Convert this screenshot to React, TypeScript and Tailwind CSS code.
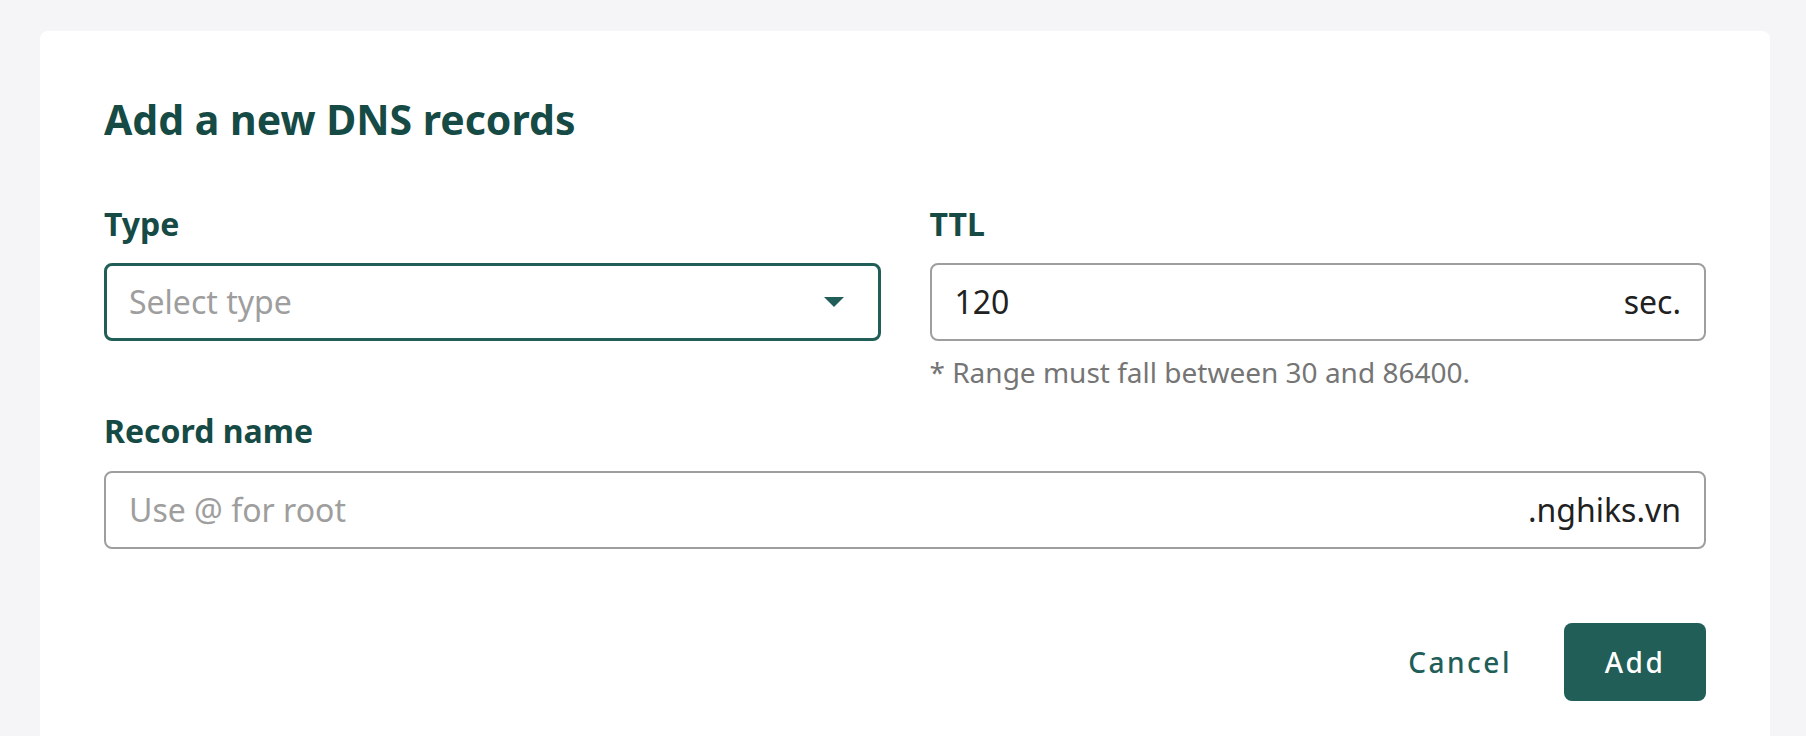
export default function App() {
  return (
    <main
      className="min-h-screen bg-[#f5f5f7] pt-[31px] pl-[40px] pr-[36px]"
      style={{ fontFamily: '"Noto Sans", "Open Sans", sans-serif' }}
    >
      <div className="rounded-lg bg-white px-[64px] pt-[60px] pb-[64px]">
        {/* TITLE */}
        <h1 className="text-[41px] leading-[56px] font-bold text-[#164a45]">
          Add a new DNS records
        </h1>

        {/* TYPE + TTL */}
        <div className="mt-[55px] grid grid-cols-2 gap-x-[49px]">
          <div>
            <label className="block text-[32px] leading-[44px] font-bold text-[#164a45]">
              Type
            </label>
            <div className="mt-[17px] flex h-[78px] items-center justify-between rounded-lg border-[3px] border-[#225e58] pl-[22px] pr-[34px]">
              <span className="text-[32px] text-[#9e9e9e]">Select type</span>
              <svg width="20" height="10" viewBox="0 0 20 10">
                <path d="M0 0 L20 0 L10 10 Z" fill="#225e58" />
              </svg>
            </div>
          </div>

          <div>
            <label className="block text-[32px] leading-[44px] font-bold text-[#164a45]">
              TTL
            </label>
            <div className="mt-[17px] flex h-[78px] items-center justify-between rounded-lg border-2 border-[#9e9e9e] px-[23px]">
              <span className="text-[32px] text-[#212121]">120</span>
              <span className="text-[32px] text-[#212121]">sec.</span>
            </div>
            <p className="mt-[11px] text-[28px] leading-[40px] text-[#757575]">
              * Range must fall between 30 and 86400.
            </p>
          </div>
        </div>

        {/* RECORD NAME */}
        <div className="mt-[17px]">
          <label className="block text-[32px] leading-[44px] font-bold text-[#164a45]">
            Record name
          </label>
          <div className="mt-[18px] flex h-[78px] items-center justify-between rounded-lg border-2 border-[#9e9e9e] px-[23px]">
            <span className="text-[32px] text-[#9e9e9e]">Use @ for root</span>
            <span className="text-[32px] text-[#212121]">.nghiks.vn</span>
          </div>
        </div>

        {/* ACTIONS */}
        <div className="mt-[74px] flex items-center justify-end gap-[52px]">
          <button className="text-[28px] font-medium tracking-[2.5px] text-[#225e58]">
            Cancel
          </button>
          <button className="h-[78px] w-[142px] rounded-lg bg-[#225e58] text-[28px] font-medium tracking-[2.5px] text-white">
            Add
          </button>
        </div>
      </div>
    </main>
  );
}
